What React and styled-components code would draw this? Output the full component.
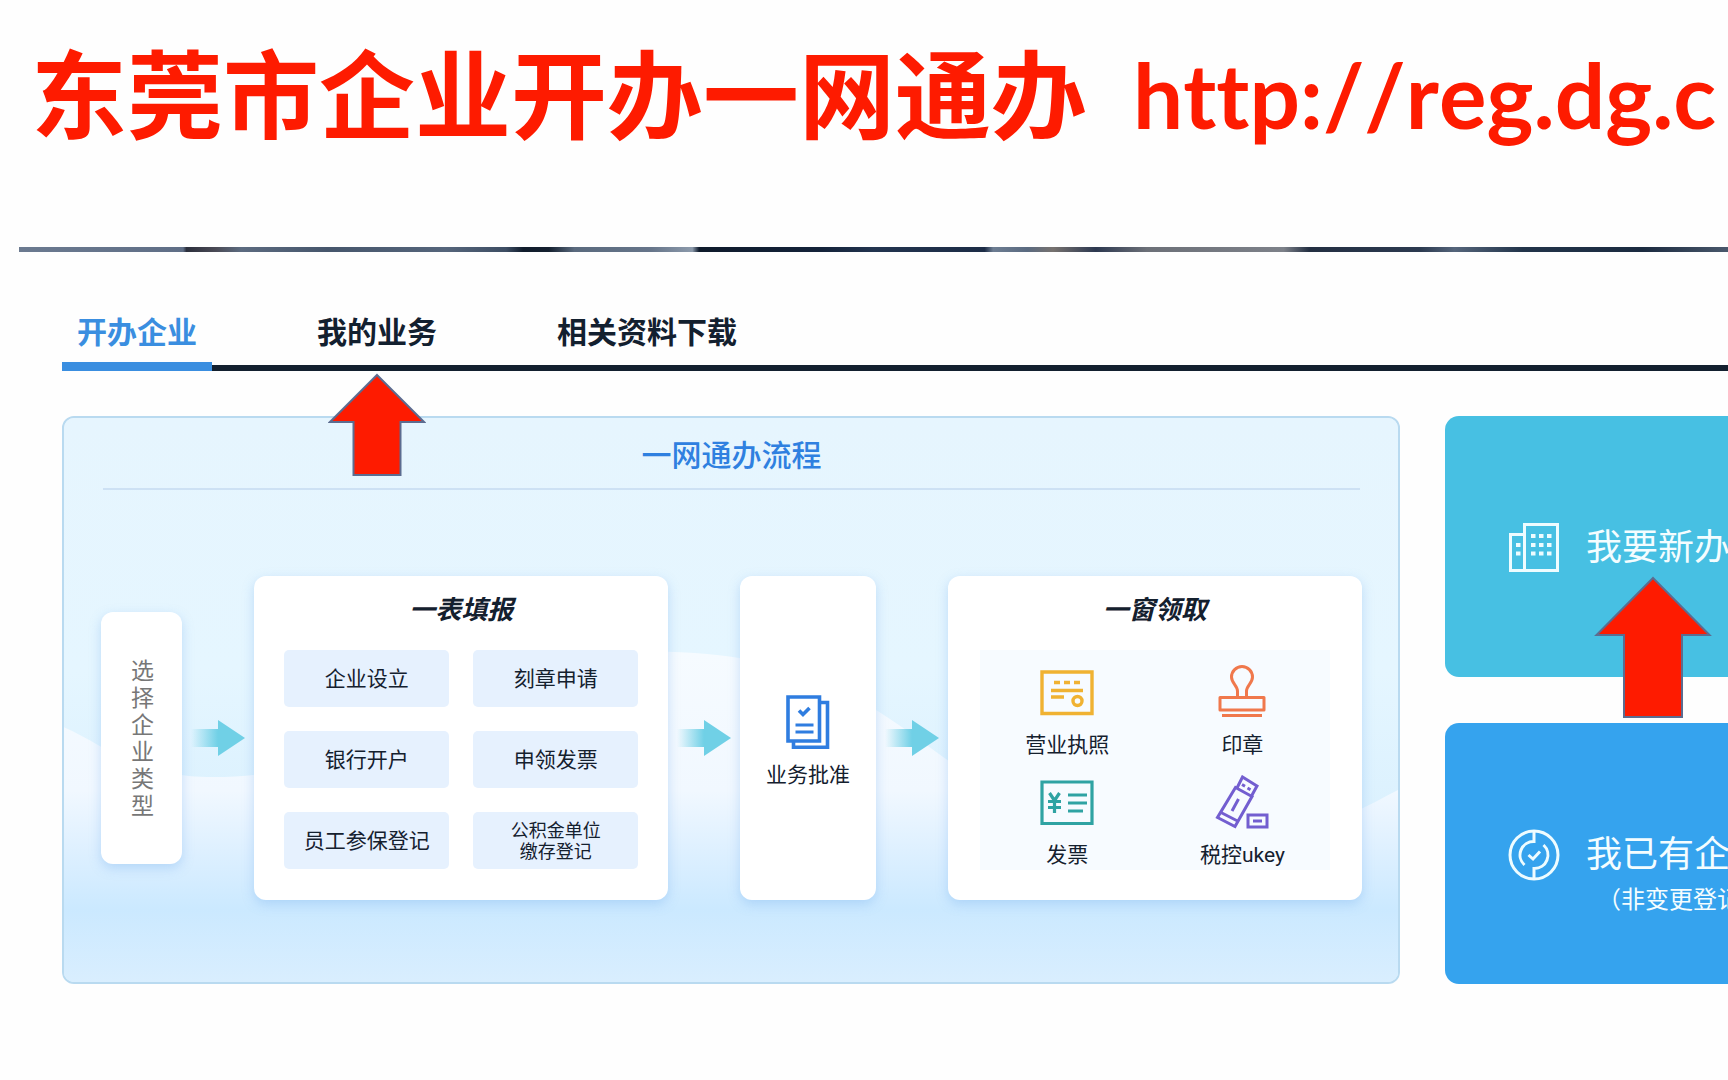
import React from "react";
import styled, { createGlobalStyle } from "styled-components";

const GlobalStyle = createGlobalStyle`
  *, *::before, *::after { box-sizing: border-box; }
  body {
    margin: 0;
    background: #fefefe;
    color: #14202e;
    font-family: Roboto, "Noto Sans CJK SC", sans-serif;
    overflow-x: hidden;
  }
  h1, h2, h3, p, ul { margin: 0; padding: 0; }
  ul { list-style: none; }
  button { font: inherit; border: 0; background: none; padding: 0; cursor: pointer; }
`;

const Page = styled.div`
  overflow: hidden;
  padding-bottom: 97px;
`;

const Banner = styled.header`
  display: flex;
  gap: 46px;
  height: 247px;
  padding: 34px 0 0 31px;
  color: #fe1b00;
  white-space: nowrap;
`;

const BannerTitle = styled.h1`
  font: 700 96px/112px "Noto Sans CJK SC", sans-serif;
`;

const BannerLink = styled.a`
  font: 700 89px/122px Lato, sans-serif;
  font-variant-ligatures: none;
  font-kerning: none;
  color: inherit;
  text-decoration: none;
`;

const PhotoStrip = styled.div`
  height: 5px;
  margin-left: 19px;
  background: linear-gradient(
    90deg,
    #6b7a90 0, #5f6e86 9.6%, #2b2f3c 9.8%, #4a4a55 11.5%, #5c6b80 13%, #46566c 18%,
    #55657b 25%, #3d4d63 28.5%, #101c2c 29.5%, #14202f 31%, #5a6a7e 32.5%, #66758a 37%,
    #8c9aab 39.4%, #0e1a2b 39.8%, #14233a 47%, #22344f 50%, #1c2c46 56.5%, #6d7d92 57%,
    #5a6a80 59%, #77726f 60.5%, #2c3850 63%, #6c7078 66%, #7d8189 74%, #232f42 75.5%,
    #2c3a50 82%, #55657b 84%, #22344a 88%, #1b2b40 95%, #4a586c 100%
  );
`;

const Content = styled.main`
  padding: 61px 0 0 62px;
`;

const TabBar = styled.nav`
  display: flex;
  gap: 90px;
  background: linear-gradient(#13202f, #13202f) bottom / 100% 6px no-repeat;
`;

const TabSlot = styled.div`
  position: relative;
`;

const Tab = styled.button`
  padding: 0 15px 9px;
  border-bottom: 9px solid ${(p) => (p.$active ? "#3a8ee0" : "transparent")};
  color: ${(p) => (p.$active ? "#3a8ee0" : "#13202f")};
  font-size: 30px;
  font-weight: 700;
  line-height: 40px;
  white-space: nowrap;
`;

const Columns = styled.div`
  display: flex;
  gap: 45px;
  margin-top: 45px;
`;

const ProcessPanel = styled.section`
  position: relative;
  isolation: isolate;
  flex: 1;
  min-width: 0;
  padding: 18px 36px 81px 37px;
  border: 2px solid #b9daf0;
  border-radius: 12px;
  background: #e6f5fe;
  overflow: hidden;
`;

const Backdrop = styled.svg`
  position: absolute;
  inset: 0;
  z-index: -1;
  width: 100%;
  height: 100%;
`;

const PanelTitle = styled.h2`
  margin: 0 2px;
  padding-bottom: 12px;
  border-bottom: 2px solid #cde1f4;
  color: #2f80e0;
  font-size: 30px;
  font-weight: 500;
  line-height: 40px;
  text-align: center;
`;

const Flow = styled.div`
  display: grid;
  grid-template-columns:
    minmax(0, 81fr) 72px minmax(0, 414fr) 72px minmax(0, 135fr) 72px minmax(0, 414fr);
  align-items: center;
  margin-top: 86px;
`;

const Card = styled.div`
  align-self: stretch;
  padding: 16px ${(p) => p.$side || 30}px 30px;
  border-radius: 12px;
  background: #fff;
  box-shadow: 0 4px 12px rgba(110, 170, 235, 0.35);
`;

const StartCard = styled.div`
  display: flex;
  align-items: center;
  justify-content: center;
  height: 252px;
  padding: 2px 0 0 2px;
  border-radius: 12px;
  background: #fff;
  box-shadow: 0 4px 12px rgba(110, 170, 235, 0.35);
`;

const StartLabel = styled.p`
  width: 24px;
  color: #777;
  font-size: 23px;
  line-height: 27px;
  text-align: center;
`;

const ApprovalCard = styled(Card)`
  display: flex;
  flex-direction: column;
  align-items: center;
  justify-content: center;
  gap: 12px;
  padding: 8px 0 0;
`;

const CardTitle = styled.h3`
  margin-bottom: 22px;
  font-size: 26px;
  font-style: italic;
  font-weight: 700;
  line-height: 36px;
  text-align: center;
`;

const ChipGrid = styled.ul`
  display: grid;
  grid-template-columns: 1fr 1fr;
  grid-auto-rows: 57px;
  gap: 24px;
`;

const Chip = styled.li`
  display: flex;
  align-items: center;
  justify-content: center;
  border-radius: 5px;
  background: #e6f1fe;
  font-size: ${(p) => (p.$small ? 18 : 21)}px;
  line-height: ${(p) => (p.$small ? 21 : 28)}px;
  text-align: center;
  white-space: pre-line;
`;

const PickupGrid = styled.ul`
  display: grid;
  grid-template-columns: 1fr 1fr;
  grid-auto-rows: 110px;
  background: #f7fbff;
`;

const PickupItem = styled.li`
  display: flex;
  flex-direction: column;
  align-items: center;
  gap: 12px;
  padding-top: 15px;
`;

const Label = styled.span`
  font-size: 21px;
  line-height: 28px;
  white-space: nowrap;
`;

const Icon = styled.svg`
  display: block;
  flex: none;
  width: 54px;
  height: 54px;
  fill: none;
  stroke: ${(p) => p.$color};
  stroke-width: ${(p) => p.$weight || 3};
`;

const FlowArrowSvg = styled.svg`
  display: block;
  width: 54px;
  height: 36px;
  justify-self: center;
`;

const Actions = styled.div`
  display: flex;
  flex-direction: column;
  gap: 46px;
  flex: none;
  width: 283px;
`;

const ActionSlot = styled.div`
  position: relative;
`;

const ActionCard = styled.button`
  display: grid;
  grid-template-columns: 54px 1fr;
  grid-template-rows: 1fr 60px 1fr;
  align-items: center;
  column-gap: 25px;
  width: 100%;
  height: 261px;
  padding: 2px 0 0 62px;
  border-radius: 14px 0 0 14px;
  background: ${(p) => p.$color};
  color: #f4fdff;
  text-align: left;
  white-space: nowrap;
  overflow: hidden;

  > * { grid-row: 2; }
`;

const ActionTitle = styled.span`
  font-size: 36px;
  line-height: 60px;
`;

const ActionNote = styled.span`
  grid-row: 3;
  grid-column: 2;
  align-self: start;
  padding-left: 11px;
  font-size: 24px;
  line-height: 30px;
`;

const Pointer = styled.svg`
  position: absolute;
  z-index: 2;
  top: ${(p) => p.$top}px;
  left: ${(p) => p.$left};
  transform: translateX(-50%);
  fill: #fe1b00;
  stroke: #5c6c90;
  stroke-width: 2;
  pointer-events: none;
`;

const CHIPS = [
  { text: "企业设立" },
  { text: "刻章申请" },
  { text: "银行开户" },
  { text: "申领发票" },
  { text: "员工参保登记" },
  { text: "公积金单位\n缴存登记", small: true },
];

function FlowArrow({ id }) {
  return (
    <FlowArrowSvg viewBox="0 0 54 36" aria-hidden="true">
      <defs>
        <linearGradient id={id} x1="0" x2="1" y1="0" y2="0">
          <stop offset="0" stopColor="#70d0e6" stopOpacity="0" />
          <stop offset="0.5" stopColor="#70d0e6" />
        </linearGradient>
      </defs>
      <path d="M0 9H27V0L54 18L27 36V27H0Z" fill={`url(#${id})`} />
    </FlowArrowSvg>
  );
}

function ApprovalIcon() {
  return (
    <Icon viewBox="0 0 54 54" $color="#2f7de0" $weight={3.6} aria-hidden="true">
      <path d="M7 2H38.500V46H7Z" />
      <path d="M38.500 7.500H46.500V52.200H12.500V46" />
      <path d="M18 15.500L22 19.500L28.500 13" />
      <path d="M14.500 30H32.500M14.500 37H32.500" strokeWidth="3" />
    </Icon>
  );
}

function LicenseIcon() {
  return (
    <Icon viewBox="0 0 54 54" $color="#f0b232" $weight={3.4} aria-hidden="true">
      <path d="M2 7H52V48.500H2Z" />
      <path d="M14 17.500H20M24 17.500H30M34 17.500H40M11 25.500H43M11 32H24" />
      <circle cx="37.500" cy="36" r="4.500" />
    </Icon>
  );
}

function StampIcon() {
  return (
    <Icon viewBox="0 0 54 54" $color="#f0784c" aria-hidden="true">
      <path d="M22.500 32V26C22.500 21 16.500 18 16.500 12A10.500 10.500 0 0 1 37.500 12C37.500 18 31.500 21 31.500 26V32" />
      <path d="M5 32.500H49V45H5Z" strokeLinejoin="round" />
      <path d="M7 50.500H47" />
    </Icon>
  );
}

function InvoiceIcon() {
  return (
    <Icon viewBox="0 0 54 54" $color="#2fa3a3" $weight={3.2} aria-hidden="true">
      <path d="M2 7H52V48.500H2Z" />
      <path d="M9.500 18L14.500 25.500L19.500 18M14.500 25.500V38M8 26.500H21M8 32.500H21" />
      <path d="M28 20H47M28 28H47M28 36H43" />
    </Icon>
  );
}

function UkeyIcon() {
  return (
    <Icon viewBox="0 0 54 54" $color="#735ed0" aria-hidden="true">
      <path d="M20.500 12.500L37 21.500L20 51.500L2.500 42.500Z" />
      <path d="M22 13L27.500 2L42 11L36.500 21" />
      <path d="M5 37L23.500 46.500M23.500 24L17 36" />
      <path d="M27 9.500L30 11.200M32.500 13L35.500 14.700" />
      <path d="M33 40H52V52H33Z" />
      <path d="M38 46H47" />
    </Icon>
  );
}

function BuildingIcon() {
  const windows = [];
  for (const y of [13, 22, 30.5]) {
    for (const x of [24, 32, 40]) windows.push([x, y]);
  }
  windows.push([9, 22], [9, 30.5]);
  return (
    <Icon viewBox="0 0 54 54" $color="#eefcff" aria-hidden="true">
      <path d="M17.500 3.500H50.500V49.500H17.500ZM17.500 13.500H3.500V49.500H17.500" />
      {windows.map(([x, y]) => (
        <rect key={`${x}-${y}`} x={x} y={y} width="4.500" height="4" fill="#eefcff" stroke="none" />
      ))}
    </Icon>
  );
}

function ExistingIcon() {
  return (
    <Icon viewBox="0 0 54 54" $color="#eefcff" aria-hidden="true">
      <circle cx="27" cy="27" r="24" />
      <path d="M27 3V13.500A13.500 13.500 0 0 0 17.500 37" />
      <path d="M27 51V40.500A13.500 13.500 0 0 0 36.500 17" />
      <path d="M21.500 27L26 31L33 23.500" />
    </Icon>
  );
}

function PanelBackdrop() {
  return (
    <Backdrop viewBox="0 0 1337 567" preserveAspectRatio="none" aria-hidden="true">
      <defs>
        <linearGradient id="sky" x1="0" x2="0" y1="0" y2="1">
          <stop offset="0" stopColor="#e6f5fe" />
          <stop offset="0.45" stopColor="#e5f6ff" />
          <stop offset="0.75" stopColor="#d9f0fe" />
        </linearGradient>
        <linearGradient id="hill" gradientUnits="userSpaceOnUse" x1="0" x2="0" y1="235" y2="567">
          <stop offset="0" stopColor="#f6fbff" />
          <stop offset="0.42" stopColor="#f1f8ff" />
          <stop offset="0.6" stopColor="#def0ff" />
          <stop offset="0.78" stopColor="#cbe9ff" />
          <stop offset="1" stopColor="#d9eefe" />
        </linearGradient>
      </defs>
      <rect width="1337" height="567" fill="url(#sky)" />
      <path
        d="M0 311C40 328 70 361 150 361C330 361 440 235 605 235C740 238 800 280 880 340C1000 425 1160 440 1240 417C1280 405 1310 388 1337 374V567H0Z"
        fill="url(#hill)"
      />
    </Backdrop>
  );
}

export default function App() {
  return (
    <Page>
      <GlobalStyle />
      <Banner>
        <BannerTitle>东莞市企业开办一网通办</BannerTitle>
        <BannerLink href="#reg">http://reg.dg.c</BannerLink>
      </Banner>
      <PhotoStrip />
      <Content>
        <TabBar>
          <TabSlot>
            <Tab type="button" $active>开办企业</Tab>
          </TabSlot>
          <TabSlot>
            <Tab type="button">我的业务</Tab>
            <Pointer $top={60} $left="50%" width="98" height="104" viewBox="0 0 98 104" aria-hidden="true">
              <path d="M49 2L96 49H72.500V102H25.500V49H2Z" />
            </Pointer>
          </TabSlot>
          <TabSlot>
            <Tab type="button">相关资料下载</Tab>
          </TabSlot>
        </TabBar>
        <Columns>
          <ProcessPanel>
            <PanelBackdrop />
            <PanelTitle>一网通办流程</PanelTitle>
            <Flow>
              <StartCard>
                <StartLabel>选择企业类型</StartLabel>
              </StartCard>
              <FlowArrow id="arrow-1" />
              <Card>
                <CardTitle>一表填报</CardTitle>
                <ChipGrid>
                  {CHIPS.map((chip) => (
                    <Chip key={chip.text} $small={chip.small}>{chip.text}</Chip>
                  ))}
                </ChipGrid>
              </Card>
              <FlowArrow id="arrow-2" />
              <ApprovalCard>
                <ApprovalIcon />
                <Label>业务批准</Label>
              </ApprovalCard>
              <FlowArrow id="arrow-3" />
              <Card $side={32}>
                <CardTitle>一窗领取</CardTitle>
                <PickupGrid>
                  <PickupItem><LicenseIcon /><Label>营业执照</Label></PickupItem>
                  <PickupItem><StampIcon /><Label>印章</Label></PickupItem>
                  <PickupItem><InvoiceIcon /><Label>发票</Label></PickupItem>
                  <PickupItem><UkeyIcon /><Label>税控ukey</Label></PickupItem>
                </PickupGrid>
              </Card>
            </Flow>
          </ProcessPanel>
          <Actions>
            <ActionSlot>
              <ActionCard type="button" $color="#47c0e3">
                <BuildingIcon />
                <ActionTitle>我要新办</ActionTitle>
              </ActionCard>
              <Pointer $top={160} $left="208px" width="118" height="143" viewBox="0 0 118 143" aria-hidden="true">
                <path d="M59 2L115.500 59H88V141H30V59H2.500Z" />
              </Pointer>
            </ActionSlot>
            <ActionSlot>
              <ActionCard type="button" $color="#35a3ee">
                <ExistingIcon />
                <ActionTitle>我已有企</ActionTitle>
                <ActionNote>（非变更登记</ActionNote>
              </ActionCard>
            </ActionSlot>
          </Actions>
        </Columns>
      </Content>
    </Page>
  );
}
